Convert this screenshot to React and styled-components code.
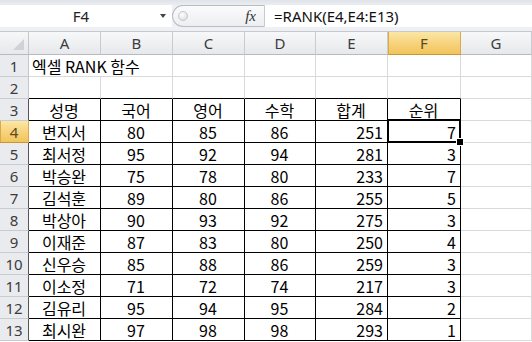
import React from "react";
import styled, { createGlobalStyle, css } from "styled-components";

const GlobalStyle = createGlobalStyle`
  html, body {
    margin: 0;
    padding: 0;
    background: #ffffff;
  }
  * {
    box-sizing: border-box;
  }
`;

const cellFont = `"Noto Sans CJK KR", "Noto Sans", sans-serif`;
const uiFont = `"Noto Sans", "Noto Sans CJK KR", sans-serif`;

const Window = styled.div`
  width: 532px;
  height: 342px;
  overflow: hidden;
  background: #ffffff;
  font-family: ${cellFont};
`;

const FormulaBar = styled.div`
  height: 32px;
  padding: 5px 0 4px;
  display: flex;
  background: linear-gradient(#dfe3e8, #eef0f3 20%, #eef0f3);
  border-bottom: 1px solid #c6c9ce;
`;

const NameBox = styled.div`
  width: 172px;
  display: flex;
  align-items: center;
  background: #ffffff;
  font-family: ${uiFont};
  font-size: 15px;
  color: #222;
`;

const NameText = styled.span`
  flex: 1;
  text-align: center;
  padding-left: 2px;
`;

const Arrow = styled.span`
  width: 0;
  height: 0;
  margin-right: 6px;
  border-left: 3px solid transparent;
  border-right: 3px solid transparent;
  border-top: 4px solid #444;
`;

const Pill = styled.div`
  width: 93px;
  display: flex;
  align-items: center;
  justify-content: space-between;
  padding: 0 8px 0 5px;
  background: linear-gradient(#fbfbfc, #eceef1);
  border: 1px solid #b9bdc3;
  border-right: 1px solid #c8ccd1;
  border-radius: 12px 0 0 12px;
`;

const Dot = styled.span`
  width: 10px;
  height: 10px;
  border-radius: 50%;
  background: radial-gradient(circle at 40% 35%, #ffffff, #d3d6da);
  border: 1px solid #c4c7cc;
`;

const Fx = styled.span`
  font-family: "Liberation Serif", serif;
  font-style: italic;
  font-size: 15px;
  color: #333;
`;

const FormulaInput = styled.div`
  flex: 1;
  display: flex;
  align-items: center;
  padding-left: 9px;
  background: #ffffff;
  font-family: ${uiFont};
  font-size: 15px;
  color: #111;
`;

const Sheet = styled.div`
  display: grid;
  grid-template-columns: 29px 72px 72px 72px 71px 72px 73px 1fr;
  grid-template-rows: 23px repeat(13, 22px);
`;

const Corner = styled.div`
  position: relative;
  background: linear-gradient(#f6f7f8, #e6e8eb);
  border-right: 1px solid #c3c6cb;
  border-bottom: 1px solid #b7bbc0;
  &::after {
    content: "";
    position: absolute;
    right: 4px;
    bottom: 4px;
    border-left: 11px solid transparent;
    border-bottom: 11px solid #cfd2d6;
  }
`;

const activeHead = css`
  background: linear-gradient(#fbe7a6, #f6d27a 55%, #f1c55c);
  border-right: 1px solid #d9a94a;
  border-bottom: 1px solid #c9962f;
  box-shadow: inset 1px 0 0 #d9a94a;
  color: #5b4a20;
`;

const ColHead = styled.div`
  display: flex;
  align-items: center;
  justify-content: center;
  background: linear-gradient(#f7f8f9, #e6e8eb);
  border-right: 1px solid #c8cbd0;
  border-bottom: 1px solid #b7bbc0;
  font-family: ${uiFont};
  font-size: 15px;
  color: #3c3c3c;
  ${(p) => p.$active && activeHead}
`;

const RowHead = styled.div`
  display: flex;
  align-items: center;
  justify-content: center;
  background: #e9ebee;
  border-right: 1px solid ${(p) => (p.$dark ? "#555" : "#c3c6cb")};
  border-bottom: 1px solid #c8cbd0;
  font-family: ${uiFont};
  font-size: 15px;
  color: #3c3c3c;
  ${(p) => p.$active && activeHead}
`;

const Cell = styled.div`
  position: relative;
  display: flex;
  align-items: center;
  justify-content: ${(p) =>
    p.$align === "right" ? "flex-end" : p.$align === "left" ? "flex-start" : "center"};
  padding: 0 4px 0 3px;
  white-space: nowrap;
  grid-column: span ${(p) => p.$span || 1};
  border-right: 1px solid ${(p) => (p.$rb ? "#000" : "#d9d9d9")};
  border-bottom: 1px solid ${(p) => (p.$bb ? "#000" : "#d9d9d9")};
  font-size: 16px;
  color: #000;
  line-height: 1;
`;

const Selection = styled.div`
  position: absolute;
  top: -2px;
  left: -1px;
  right: -1px;
  bottom: -1px;
  border: 2px solid #000;
  box-shadow: inset 0 0 0 1px #fff;
  z-index: 2;
  pointer-events: none;
  &::after {
    content: "";
    position: absolute;
    right: -5px;
    bottom: -5px;
    width: 6px;
    height: 6px;
    background: #000;
    border: 1px solid #fff;
  }
`;

const columns = ["A", "B", "C", "D", "E", "F", "G"];
const headers = ["성명", "국어", "영어", "수학", "합계", "순위"];
const students = [
  ["변지서", 80, 85, 86, 251, 7],
  ["최서정", 95, 92, 94, 281, 3],
  ["박승완", 75, 78, 80, 233, 7],
  ["김석훈", 89, 80, 86, 255, 5],
  ["박상아", 90, 93, 92, 275, 3],
  ["이재준", 87, 83, 80, 250, 4],
  ["신우승", 85, 88, 86, 259, 3],
  ["이소정", 71, 72, 74, 217, 3],
  ["김유리", 95, 94, 95, 284, 2],
  ["최시완", 97, 98, 98, 293, 1],
];

const alignFor = (col) => (col >= 4 ? "right" : "center");

const App = () => {
  const rows = [];
  for (let r = 1; r <= 13; r++) {
    const cells = [];
    if (r === 1) {
      cells.push(
        <Cell key="a1" $span={2} $align="left">
          엑셀 RANK 함수
        </Cell>
      );
      for (let c = 2; c < 7; c++) cells.push(<Cell key={c} />);
    } else {
      for (let c = 0; c < 7; c++) {
        const inTable = c < 6;
        let value = "";
        let align = "center";
        if (r === 3 && inTable) value = headers[c];
        if (r >= 4 && inTable) {
          value = students[r - 4][c];
          align = alignFor(c);
        }
        cells.push(
          <Cell
            key={c}
            $align={align}
            $rb={inTable && r >= 3}
            $bb={inTable && r >= 2}
          >
            {value}
            {r === 4 && c === 5 && <Selection />}
          </Cell>
        );
      }
    }
    rows.push(
      <React.Fragment key={r}>
        <RowHead $active={r === 4} $dark={r >= 3 && r !== 4}>
          {r}
        </RowHead>
        {cells}
      </React.Fragment>
    );
  }

  return (
    <>
      <GlobalStyle />
      <Window>
        <FormulaBar>
          <NameBox>
            <NameText>F4</NameText>
            <Arrow />
          </NameBox>
          <Pill>
            <Dot />
            <Fx>fx</Fx>
          </Pill>
          <FormulaInput>=RANK(E4,E4:E13)</FormulaInput>
        </FormulaBar>
        <Sheet>
          <Corner />
          {columns.map((c) => (
            <ColHead key={c} $active={c === "F"}>
              {c}
            </ColHead>
          ))}
          {rows}
        </Sheet>
      </Window>
    </>
  );
};

export default App;
